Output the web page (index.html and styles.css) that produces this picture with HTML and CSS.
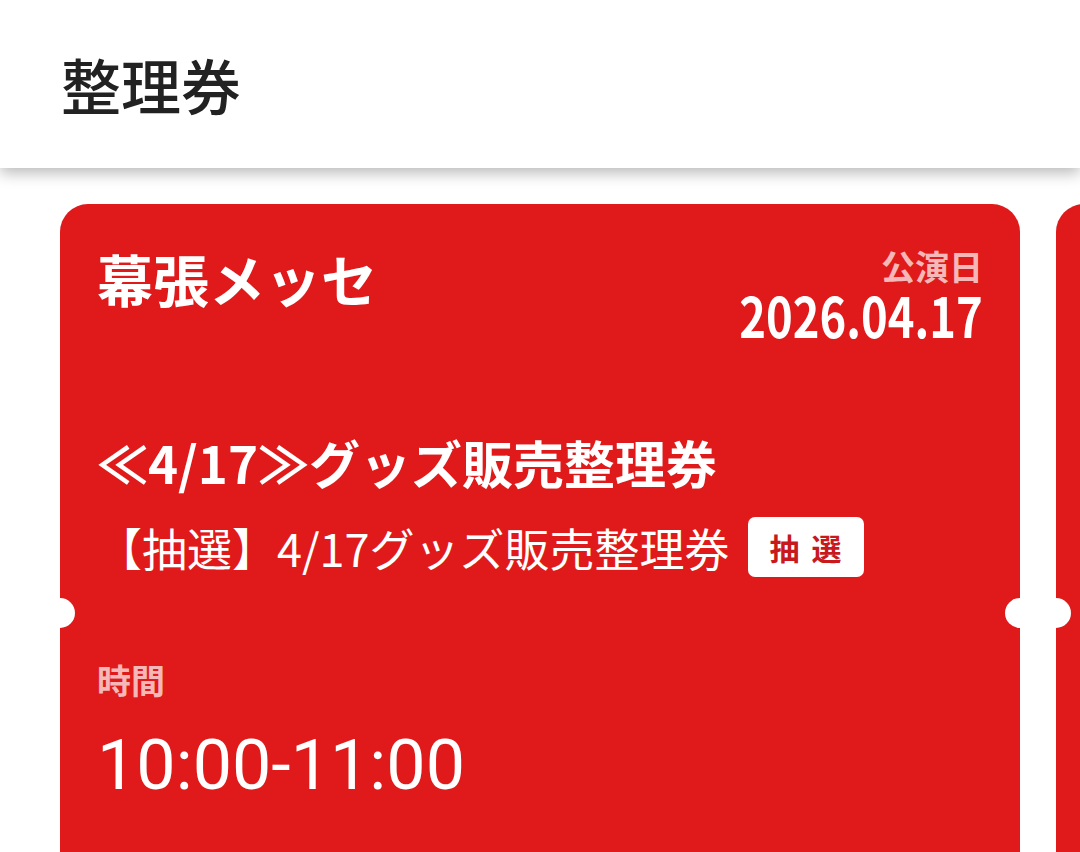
FILE: index.html
```html
<!DOCTYPE html>
<html lang="ja">
<head>
<meta charset="utf-8">
<title>整理券</title>
<link rel="stylesheet" href="styles.css">
</head>
<body>
<header class="app-bar">
  <h1 class="app-title">整理券</h1>
</header>
<main class="ticket-strip">
  <section class="ticket">
    <div class="ticket-head">
      <h2 class="venue">幕張メッセ</h2>
      <div class="show-date">
        <div class="label">公演日</div>
        <div class="date">2026.04.17</div>
      </div>
    </div>
    <h3 class="ticket-name">≪4/17≫グッズ販売整理券</h3>
    <div class="ticket-sub">
      <span class="sub-text">【抽選】4/17グッズ販売整理券</span>
      <span class="badge">抽選</span>
    </div>
    <div class="time-block">
      <div class="label">時間</div>
      <div class="time">10:00-11:00</div>
    </div>
  </section>
  <section class="ticket ticket-next" aria-hidden="true"></section>
</main>
</body>
</html>
```

FILE: styles.css
```css
html, body {
  margin: 0;
  padding: 0;
  overflow: hidden;
  background: #ffffff;
}
body {
  font-family: "Noto Sans CJK JP", "Noto Sans", Roboto, sans-serif;
  width: 1080px;
  height: 852px;
}
.app-bar {
  position: relative;
  z-index: 2;
  height: 168px;
  background: #ffffff;
  display: flex;
  align-items: center;
  padding-left: 61px;
  box-shadow: 0 5px 14px rgba(0, 0, 0, 0.28);
}
.app-title {
  margin: 0;
  font-size: 60px;
  line-height: 1;
  font-weight: 500;
  color: #222222;
}
.ticket-strip {
  display: flex;
  gap: 36px;
  padding: 36px 0 0 60px;
  overflow: hidden;
}
.ticket {
  position: relative;
  flex: 0 0 960px;
  box-sizing: border-box;
  min-height: 720px;
  background: #e01a1a;
  border-radius: 28px;
  padding: 46px 37px 0 37px;
  color: #ffffff;
}
.ticket::before,
.ticket::after {
  content: "";
  position: absolute;
  top: 394px;
  width: 30px;
  height: 30px;
  border-radius: 50%;
  background: #ffffff;
}
.ticket::before { left: -15px; }
.ticket::after { right: -15px; }
.ticket-head {
  display: flex;
  justify-content: space-between;
  align-items: flex-start;
}
.venue {
  margin: 0;
  font-size: 56px;
  line-height: 1;
  font-weight: 700;
}
.show-date {
  display: flex;
  flex-direction: column;
  align-items: flex-end;
  margin-top: -1px;
}
.label {
  font-size: 34px;
  line-height: 1;
  font-weight: 700;
  color: rgba(255, 255, 255, 0.7);
}
.date {
  margin-top: 3px;
  font-size: 56px;
  line-height: 1;
  font-weight: 700;
  transform: scaleX(0.81);
  transform-origin: right center;
}
.ticket-name {
  margin: 95px 0 0 0;
  font-size: 51px;
  line-height: 1;
  font-weight: 700;
}
.ticket-sub {
  display: flex;
  align-items: center;
  gap: 18px;
  margin-top: 29px;
}
.sub-text {
  font-size: 45px;
  line-height: 1;
  font-weight: 400;
}
.badge {
  display: inline-flex;
  align-items: center;
  height: 60px;
  box-sizing: border-box;
  padding: 0 10px 0 22px;
  background: #ffffff;
  color: #c8191c;
  border-radius: 7px;
  font-size: 30px;
  font-weight: 700;
  letter-spacing: 12px;
}
.time-block {
  margin-top: 86px;
}
.time {
  margin-top: 33px;
  font-family: Roboto, "Noto Sans", sans-serif;
  font-size: 70px;
  line-height: 1;
  font-weight: 400;
}
```
